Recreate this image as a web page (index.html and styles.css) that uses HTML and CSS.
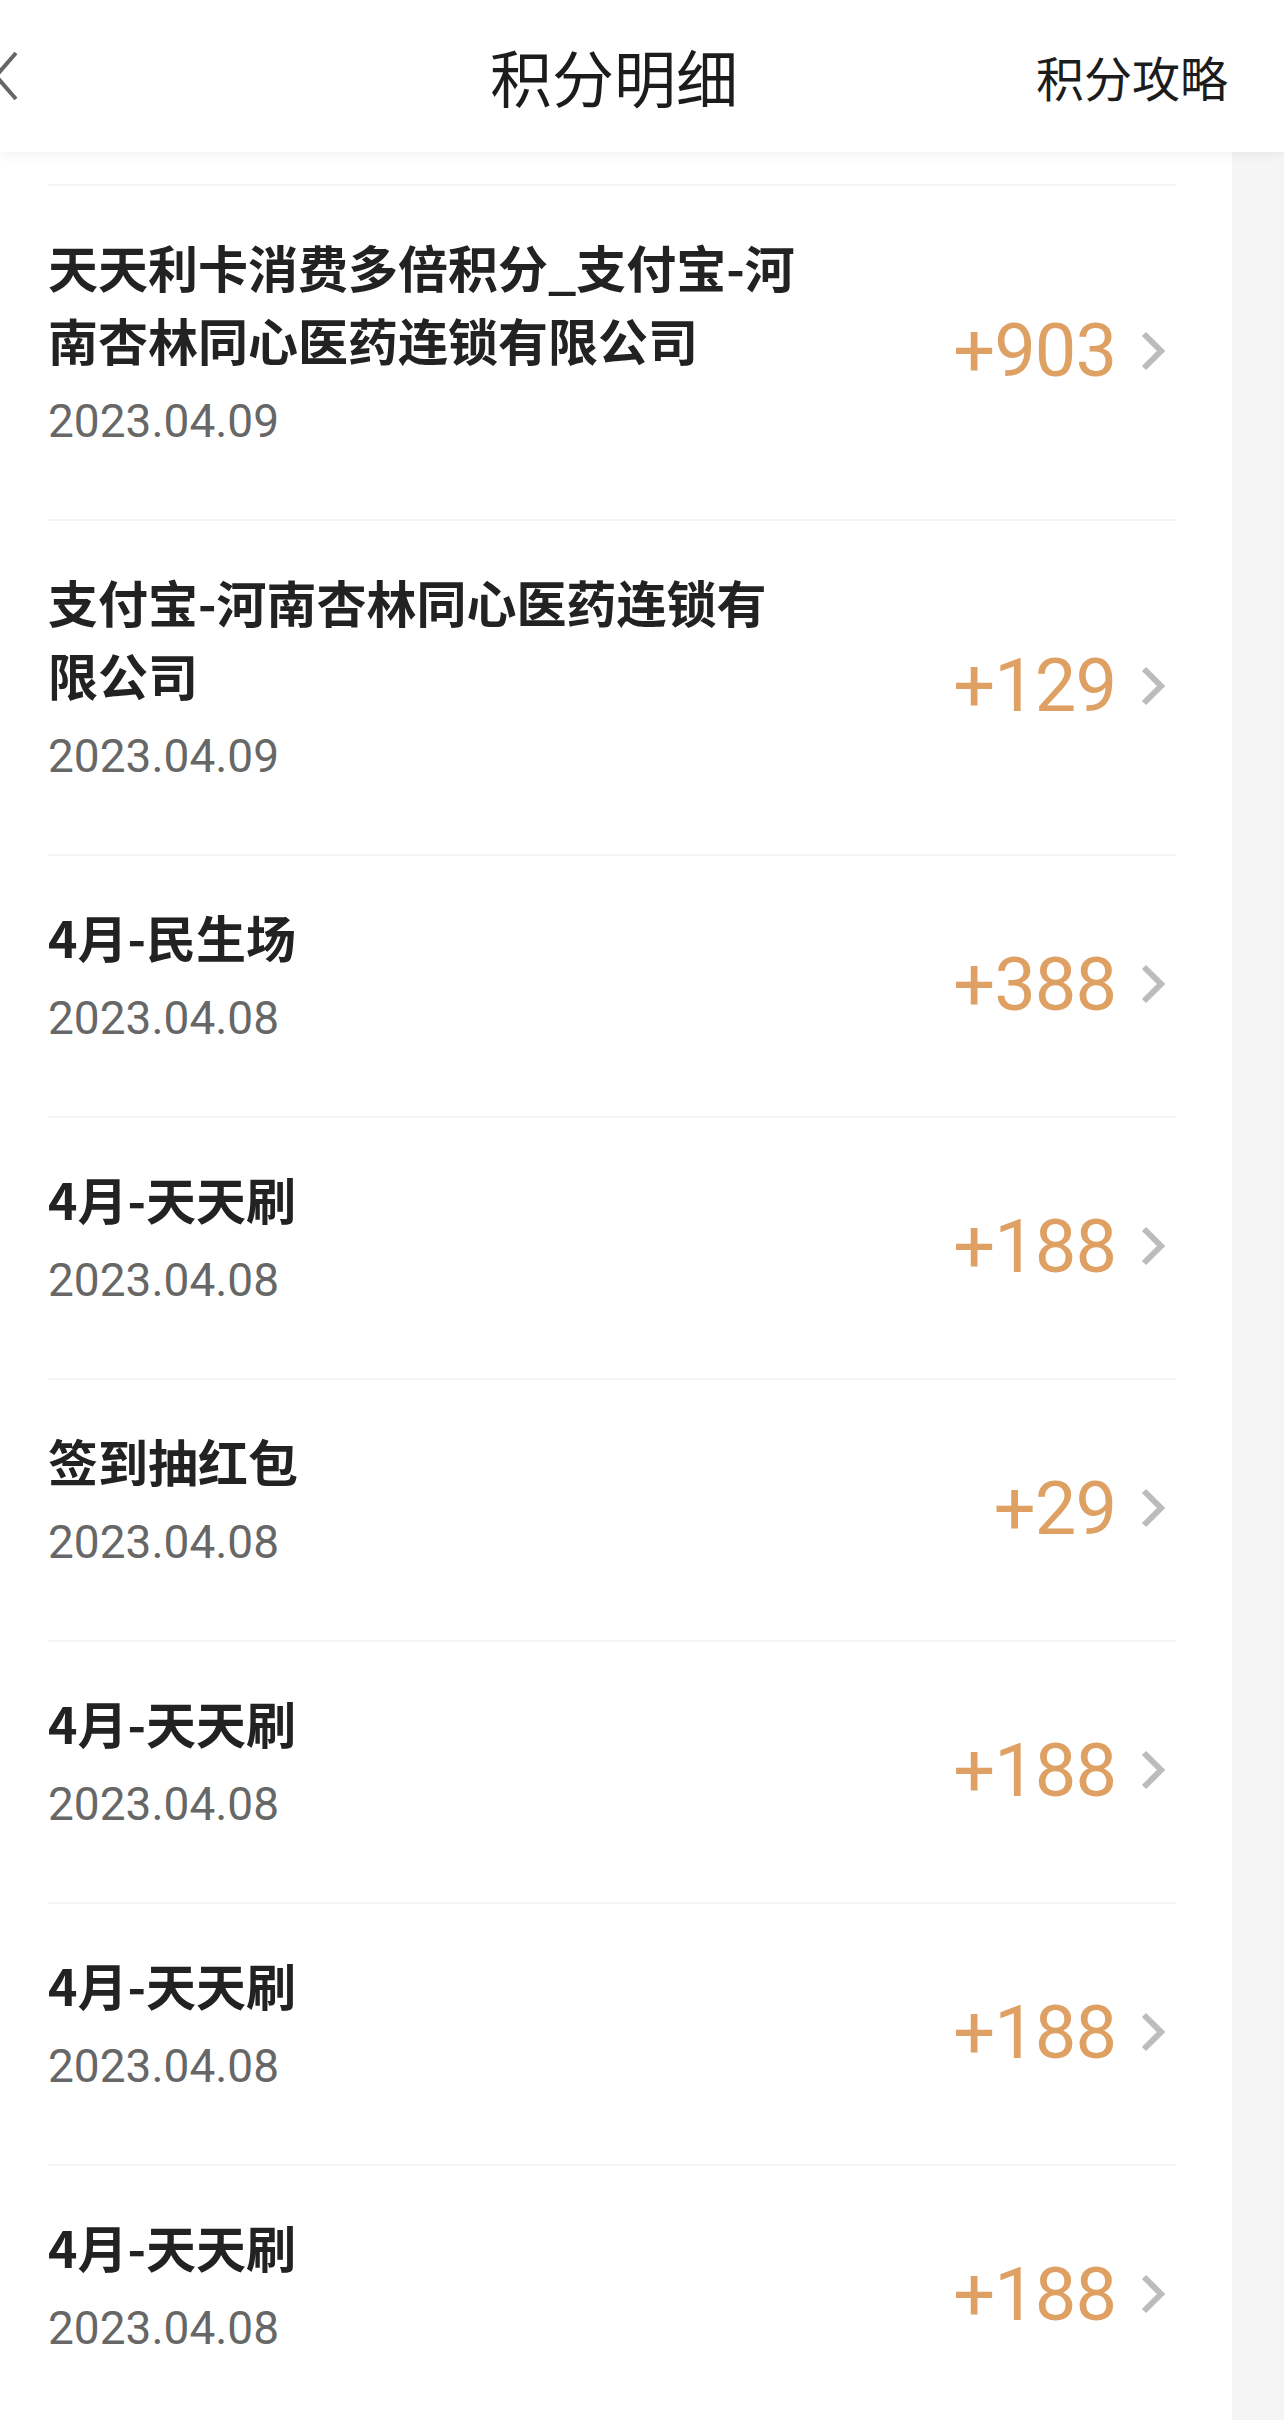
FILE: index.html
```html
<!DOCTYPE html>
<html lang="zh-CN">
  <head>
    <meta charset="UTF-8" />
    <meta name="viewport" content="width=device-width, initial-scale=1.0" />
    <title>积分明细</title>
    <link rel="stylesheet" href="styles.css">
  </head>
  <body>
    <div class="header">
      <div class="header-inner">
        <a class="back" href="#">
          <svg width="28" height="52" viewBox="0 0 28 52">
            <path d="M26 3 L6 26 L26 49" fill="none" stroke="#666" stroke-width="4" />
          </svg>
        </a>
        <h1>积分明细</h1>
        <a class="guide" href="#">积分攻略</a>
      </div>
    </div>
    <div class="list">
      <div class="item">
        <div class="info">
          <p class="name">天天利卡消费多倍积分_支付宝-河南杏林同心医药连锁有限公司</p>
          <p class="date">2023.04.09</p>
        </div>
        <div class="points"><span>+903</span><svg class="arrow" width="26" height="40" viewBox="0 0 26 40"><path d="M4 3 L21 20 L4 37" fill="none" stroke="#bcbcbc" stroke-width="6" /></svg></div>
      </div>
      <div class="item">
        <div class="info">
          <p class="name">支付宝-河南杏林同心医药连锁有限公司</p>
          <p class="date">2023.04.09</p>
        </div>
        <div class="points"><span>+129</span><svg class="arrow" width="26" height="40" viewBox="0 0 26 40"><path d="M4 3 L21 20 L4 37" fill="none" stroke="#bcbcbc" stroke-width="6" /></svg></div>
      </div>
      <div class="item">
        <div class="info">
          <p class="name">4月-民生场</p>
          <p class="date">2023.04.08</p>
        </div>
        <div class="points"><span>+388</span><svg class="arrow" width="26" height="40" viewBox="0 0 26 40"><path d="M4 3 L21 20 L4 37" fill="none" stroke="#bcbcbc" stroke-width="6" /></svg></div>
      </div>
      <div class="item">
        <div class="info">
          <p class="name">4月-天天刷</p>
          <p class="date">2023.04.08</p>
        </div>
        <div class="points"><span>+188</span><svg class="arrow" width="26" height="40" viewBox="0 0 26 40"><path d="M4 3 L21 20 L4 37" fill="none" stroke="#bcbcbc" stroke-width="6" /></svg></div>
      </div>
      <div class="item">
        <div class="info">
          <p class="name">签到抽红包</p>
          <p class="date">2023.04.08</p>
        </div>
        <div class="points"><span>+29</span><svg class="arrow" width="26" height="40" viewBox="0 0 26 40"><path d="M4 3 L21 20 L4 37" fill="none" stroke="#bcbcbc" stroke-width="6" /></svg></div>
      </div>
      <div class="item">
        <div class="info">
          <p class="name">4月-天天刷</p>
          <p class="date">2023.04.08</p>
        </div>
        <div class="points"><span>+188</span><svg class="arrow" width="26" height="40" viewBox="0 0 26 40"><path d="M4 3 L21 20 L4 37" fill="none" stroke="#bcbcbc" stroke-width="6" /></svg></div>
      </div>
      <div class="item">
        <div class="info">
          <p class="name">4月-天天刷</p>
          <p class="date">2023.04.08</p>
        </div>
        <div class="points"><span>+188</span><svg class="arrow" width="26" height="40" viewBox="0 0 26 40"><path d="M4 3 L21 20 L4 37" fill="none" stroke="#bcbcbc" stroke-width="6" /></svg></div>
      </div>
      <div class="item">
        <div class="info">
          <p class="name">4月-天天刷</p>
          <p class="date">2023.04.08</p>
        </div>
        <div class="points"><span>+188</span><svg class="arrow" width="26" height="40" viewBox="0 0 26 40"><path d="M4 3 L21 20 L4 37" fill="none" stroke="#bcbcbc" stroke-width="6" /></svg></div>
      </div>
    </div>
  </body>
</html>
```

FILE: styles.css
```css
body {
  margin: 0;
  overflow: hidden;
  background-color: #f5f5f5;
  font-family: "Noto Sans CJK SC", "Noto Sans", sans-serif;
}
.header {
  position: relative;
  z-index: 1;
  height: 152px;
  background-color: #fff;
  box-shadow: 0 2px 12px rgba(0, 0, 0, 0.06);
}
.header-inner {
  width: 1232px;
  height: 152px;
  box-sizing: border-box;
  padding-right: 4px;
  display: grid;
  grid-template-columns: 1fr auto 1fr;
  align-items: center;
}
.back {
  display: flex;
  margin-left: -10px;
}
.header h1 {
  margin: 0;
  font-size: 62px;
  font-weight: 400;
  color: #1c1c1c;
  line-height: 1;
}
.guide {
  justify-self: end;
  text-decoration: none;
  font-size: 48px;
  color: #1c1c1c;
  line-height: 1;
}
.list {
  width: 1232px;
  box-sizing: border-box;
  padding: 32px 56px 0 48px;
  background-color: #fff;
}
.item {
  display: flex;
  justify-content: space-between;
  border-top: 2px solid #f4f4f4;
}
.info {
  padding: 44px 0 70px;
}
.name {
  margin: 0;
  max-width: 756px;
  font-size: 50px;
  line-height: 73px;
  font-weight: 700;
  color: #222;
}
.date {
  margin: 17px 0 0;
  font-family: Roboto, "Noto Sans", sans-serif;
  font-size: 46px;
  line-height: 56px;
  color: #676767;
}
.points {
  align-self: center;
  display: flex;
  align-items: center;
  padding-bottom: 4px;
  margin-right: 10px;
}
.points span {
  font-family: Roboto, "Noto Sans", sans-serif;
  font-size: 74px;
  letter-spacing: -1px;
  color: #dea163;
}
.arrow {
  margin-left: 24px;
}
```
